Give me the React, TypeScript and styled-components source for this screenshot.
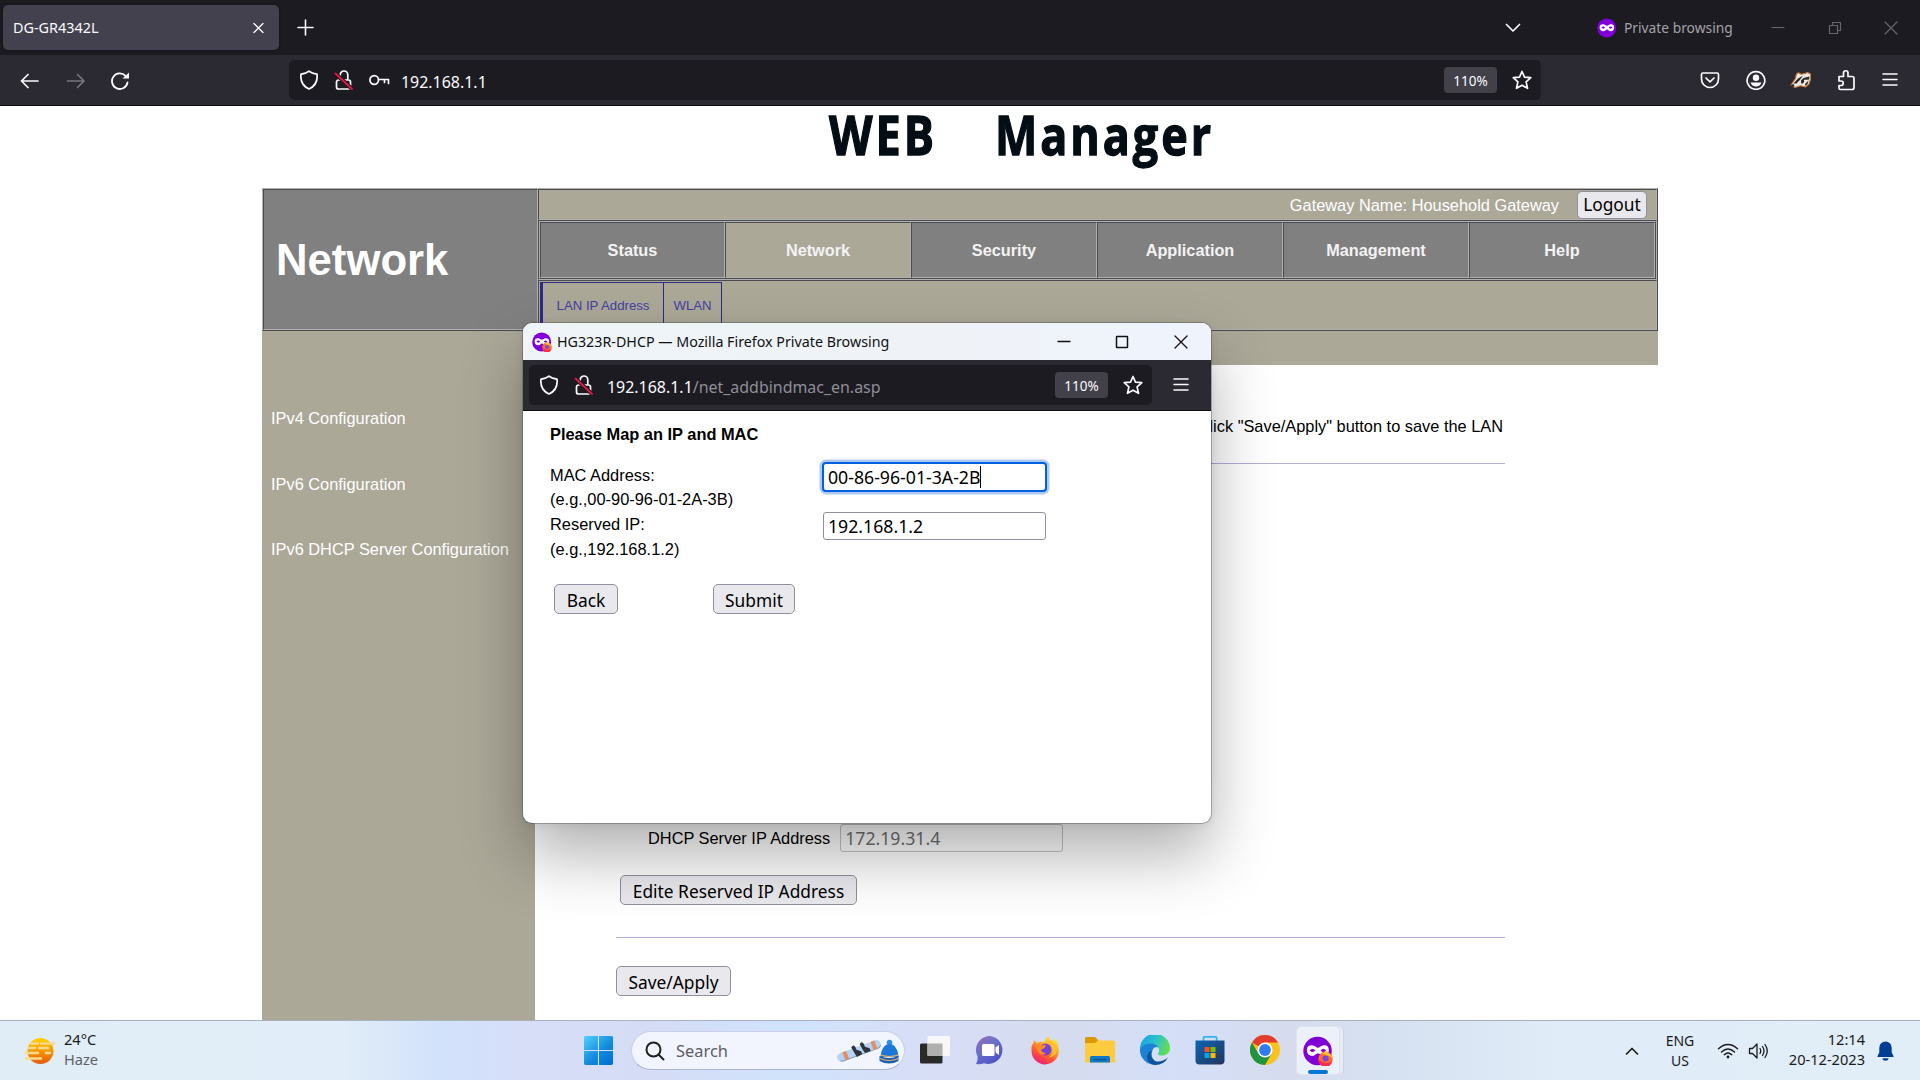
import React from 'react';
import styled, { createGlobalStyle, css } from 'styled-components';

const segoe = '"Noto Sans", "Open Sans", sans-serif';
const arial = '"Liberation Sans", Arial, sans-serif';
const sand = '#aba898';
const light = '#b0b0b0';
const dark = '#4b4b50';

const GlobalStyle = createGlobalStyle`
  * { box-sizing: border-box; }
  body { margin: 0; overflow: hidden; background: #fff; }
  svg { display: block; flex: none; }
`;

const Desktop = styled.div`
  width: 1920px;
  height: 1080px;
  display: grid;
  grid-template-rows: 55px 51px 914px 60px;
  font-family: ${segoe};
  position: relative;
  overflow: hidden;
`;

/* ---------- browser chrome ---------- */
const TabBar = styled.header`
  background: #1c1b22;
  display: flex;
  align-items: center;
  color: #fbfbfe;
`;
const Tab = styled.div`
  width: 276px;
  height: 45px;
  margin-left: 3px;
  border-radius: 5px;
  background: #42414d;
  box-shadow: 0 0 3px rgba(0, 0, 0, 0.5);
  display: flex;
  align-items: center;
  justify-content: space-between;
  padding: 0 15px 0 10px;
  font-size: 14.4px;
`;
const Gap = styled.div<{ $w: number }>`
  width: ${(p) => p.$w}px;
  flex: none;
`;
const Grow = styled.div`
  flex: 1;
`;
const PrivateLabel = styled.span`
  font-size: 13.8px;
  color: #a3a2a8;
  width: 148px;
  padding: 0 0 1px 7px;
`;
const Toolbar = styled.nav`
  background: #2b2a33;
  border-bottom: 1px solid #0c0c0d;
  display: flex;
  align-items: center;
  color: #fbfbfe;
`;
const UrlField = styled.div<{ $w: number }>`
  width: ${(p) => p.$w}px;
  height: 40px;
  border-radius: 5px;
  background: #1c1b22;
  display: flex;
  align-items: center;
  padding: 0 9px 0 10px;
`;
const Url = styled.span`
  font-size: 15.95px;
  line-height: 24px;
  padding-top: 4px;
  white-space: nowrap;
`;
const Dim = styled.span`
  color: #8f8f96;
`;
const Zoom = styled.span`
  width: 53px;
  height: 26px;
  line-height: 28px;
  border-radius: 4px;
  background: #42414a;
  font-size: 13.5px;
  text-align: center;
`;

/* ---------- router page ---------- */
const Page = styled.main`
  background: #fff;
  font-family: ${arial};
  font-size: 16.37px;
  padding-left: 262px;
`;
const Logo = styled.div`
  height: 82px;
  svg {
    overflow: visible;
  }
`;
const Header = styled.div`
  width: 1396px;
  height: 143px;
  display: grid;
  grid-template-columns: 275px 1fr;
  background: ${sand};
  border: 1px solid;
  border-color: ${light} ${dark} ${dark} ${light};
`;
const inset = css`
  border: 1px solid;
  border-color: ${dark} ${light} ${light} ${dark};
`;
const Section = styled.h1`
  ${inset}
  margin: 0;
  background: #808080;
  color: #fff;
  font-size: 43.7px;
  display: flex;
  align-items: center;
  padding-left: 12px;
`;
const HeaderRows = styled.div`
  display: grid;
  grid-template-rows: 31px 60px 50px;
`;
const GatewayRow = styled.div`
  ${inset}
  display: flex;
  align-items: center;
  justify-content: flex-end;
  gap: 18px;
  padding: 0 9px 0 0;
  color: #fff;
`;
const GatewayName = styled.span`
  padding-top: 2px;
`;
const MenuRow = styled.div`
  ${inset}
`;
const Menu = styled.div`
  height: 58px;
  width: 1117px;
  display: grid;
  grid-template-columns: 185px repeat(5, 186px);
  border: 1px solid;
  border-color: ${light} ${dark} ${dark} ${light};
`;
const MenuItem = styled.div<{ $on?: boolean }>`
  ${inset}
  background: ${(p) => (p.$on ? sand : '#808080')};
  color: #f3f3f3;
  font-weight: bold;
  font-size: 16.3px;
  display: flex;
  align-items: center;
  justify-content: center;
`;
const SubRow = styled.div`
  ${inset}
  display: flex;
  padding: 1px 0 0 1px;
`;
const SubItem = styled.div<{ $w: number; $first?: boolean }>`
  width: ${(p) => p.$w}px;
  height: 47px;
  border: solid #2c2c88;
  border-width: 1px 0 0 ${(p) => (p.$first ? 3 : 1)}px;
  color: #4340a0;
  font-size: 13.2px;
  display: flex;
  align-items: center;
  justify-content: center;
  padding-bottom: 1px;
  &:last-child {
    border-right-width: 1px;
  }
`;
const Body = styled.div`
  width: 1396px;
  height: 689px;
  display: grid;
  grid-template-columns: 273px 1fr;
`;
const Side = styled.aside`
  background: ${sand};
  color: #fff;
  padding: 67px 0 0 9px;
`;
const SideLink = styled.div`
  height: 65.6px;
  line-height: 40px;
`;
const Main = styled.section`
  display: flex;
  flex-direction: column;
`;
const Strip = styled.div`
  height: 34px;
  background: ${sand};
`;
const Content = styled.div`
  width: 889px;
  margin-left: 81px;
  display: flex;
  flex-direction: column;
  align-items: flex-start;
`;
const Notice = styled.p`
  margin: 51px 2px 0 0;
  align-self: flex-end;
  line-height: 20px;
  white-space: nowrap;
`;
const Rule = styled.hr<{ $top: number }>`
  width: 100%;
  height: 1px;
  border: 0;
  margin: ${(p) => p.$top}px 0 0;
  background: #b0aedb;
`;
const ServerRow = styled.div`
  display: flex;
  align-items: center;
  gap: 10px;
  margin: 360px 0 0 32px;
`;
const Button = styled.button<{ $w: number; $h?: number; $m?: string; $lift?: boolean }>`
  width: ${(p) => p.$w}px;
  height: ${(p) => p.$h ?? 30}px;
  margin: ${(p) => p.$m ?? 0};
  padding: ${(p) => (p.$lift ? '0 0 1px' : '2px 0 0')};
  border: 1px solid #8f8f9d;
  border-radius: 5px;
  background: #e9e9ed;
  color: #000;
  font-family: ${segoe};
  font-size: 17.35px;
  line-height: 24px;
  white-space: nowrap;
`;
const inputBase = css`
  height: 28px;
  border-radius: 3px;
  background: #fff;
  font-family: ${segoe};
  font-size: 17.7px;
  line-height: 24px;
  display: flex;
  align-items: center;
  padding: 0 0 0 4px;
`;
const Field = styled.div<{ $disabled?: boolean }>`
  ${inputBase}
  width: 223px;
  border: 1px solid ${(p) => (p.$disabled ? '#c4c4c8' : '#8f8f9d')};
  color: ${(p) => (p.$disabled ? '#6f6f70' : '#000')};
`;
const FocusField = styled.div`
  ${inputBase}
  width: 225px;
  height: 30px;
  margin: 0 0 20px -1px;
  border: 2px solid #0061e0;
  border-radius: 4px;
  box-shadow: 0 0 0 2.5px #b0c9f0;
`;
const Caret = styled.span`
  width: 1px;
  height: 22px;
  background: #000;
`;

/* ---------- popup window ---------- */
const Popup = styled.div`
  position: absolute;
  left: 523px;
  top: 323px;
  width: 688px;
  height: 500px;
  border-radius: 9px;
  overflow: hidden;
  background: #fff;
  box-shadow: 0 0 0 1px rgba(60, 60, 60, 0.35), 0 32px 64px rgba(0, 0, 0, 0.31), 0 2px 10px rgba(0, 0, 0, 0.08);
  display: grid;
  grid-template-rows: 37px 51px 1fr;
`;
const TitleBar = styled.div`
  background: linear-gradient(90deg, #eef4f8, #eff3f8 60%, #eff3fc);
  display: flex;
  align-items: center;
  padding-left: 9px;
  font-size: 14.27px;
  color: #111;
`;
const Title = styled.span`
  padding: 0 0 1px 5px;
  white-space: nowrap;
`;
const Form = styled.div`
  font-family: ${arial};
  font-size: 16.4px;
  line-height: 24.6px;
  padding: 11px 0 0 27px;
  color: #000;
`;
const FormTitle = styled.div`
  font-weight: bold;
  font-size: 16.4px;
`;
const FormGrid = styled.div`
  display: grid;
  grid-template-columns: 273px 1fr;
  margin-top: 15px;
`;
const Labels = styled.div`
  padding-top: 1px;
  line-height: 24.8px;
`;
const Actions = styled.div`
  display: flex;
  gap: 95px;
  margin: 22px 0 0 4px;
`;

/* ---------- taskbar ---------- */
const Taskbar = styled.footer`
  border-top: 1px solid #a9b1bf;
  background: linear-gradient(
    90deg,
    #e1edf6 0,
    #e1edf8 340px,
    #d2e2fb 440px,
    #d7def8 530px,
    #d5dcf6 650px,
    #d0e3fb 790px,
    #d7def6 930px,
    #d6dcef 1070px,
    #d4dff8 1170px,
    #d6dcee 1290px,
    #d6e2f1 1400px,
    #e0ecf7 1560px,
    #e1edf7 1920px
  );
  display: flex;
  align-items: center;
  color: #1b1b1b;
  font-size: 14.6px;
  line-height: 20px;
`;
const Lines = styled.div<{ $w?: number; $align?: string; $size?: number; $lift?: number }>`
  width: ${(p) => (p.$w ? `${p.$w}px` : 'auto')};
  text-align: ${(p) => p.$align ?? 'left'};
  font-size: ${(p) => p.$size ?? 14.6}px;
  padding-bottom: ${(p) => p.$lift ?? 0}px;
  white-space: nowrap;
`;
const Muted = styled.div`
  color: #5d6064;
`;
const SearchPill = styled.div`
  width: 274px;
  height: 39px;
  margin-left: 18px;
  border-radius: 20px;
  background: #f2f5fd;
  border: 1px solid #c9d0e6;
  border-bottom-color: #aeb5cc;
  display: flex;
  align-items: center;
  padding: 0 5px 0 13px;
  font-size: 16.4px;
  color: #5c5e63;
`;
const AppRow = styled.div`
  display: flex;
  align-items: center;
  gap: 25px;
  margin: 0 0 1px 15px;
`;
const ActiveTile = styled.div`
  width: 44px;
  height: 49px;
  margin-left: 16px;
  border-radius: 5px;
  background: #ecf0f9;
  border: 1px solid #dfe4ef;
  box-shadow: 4px 0 0 -1px #e5eaf5, 5px 0 0 -1px #cdd4e2;
  display: flex;
  flex-direction: column;
  align-items: center;
  justify-content: space-between;
  padding-top: 9px;
`;
const Indicator = styled.div`
  width: 20px;
  height: 4px;
  border-radius: 2px;
  background: #0078d4;
`;

/* ---------- icons ---------- */
type G = { d: string; w?: number; h?: number; sw?: number; color?: string; children?: React.ReactNode };
const Glyph = ({ d, w = 20, h = 20, sw = 1.5, color = 'currentColor', children }: G) => (
  <svg width={w} height={h} viewBox={`0 0 ${w} ${h}`} fill="none" stroke={color} strokeWidth={sw} strokeLinecap="round" strokeLinejoin="round">
    <path d={d} />
    {children}
  </svg>
);
const Shield = () => (
  <Glyph sw={1.7} d="M10 1.2C8 3 5 3.8 2 4.2C1.2 11 3.5 16 10 19C16.500 16 18.800 11 18 4.200C15 3.800 12 3 10 1.200Z" />
);
const Lock = () => (
  <Glyph sw={1.7} d="M6.200 7V4.800A3.800 3.800 0 0 1 13.800 4.800V9M4.500 10H14.500A2 2 0 0 1 16.500 12V17A2 2 0 0 1 14.500 19H4.500A2 2 0 0 1 2.500 17V12A2 2 0 0 1 4.500 10Z">
    <path d="M1.500 3.500L18 19" stroke="#1c1b22" strokeWidth="4" />
    <path d="M1.500 3.500L18 19" stroke="#e8173f" strokeWidth="1.8" />
  </Glyph>
);
const Star = () => (
  <Glyph sw={1.7} d="M10 1.500L12.500 7.100L18.800 7.700L14.100 11.900L15.500 18.300L10 15.200L4.500 18.300L5.900 11.900L1.200 7.700L7.500 7.100Z" />
);
const Burger = () => <Glyph w={16} h={16} d="M1 2H15M1 7.500H15M1 13H15" />;
const Mask = ({ size = 20, fox }: { size?: number; fox?: boolean }) => (
  <svg width={size} height={size} viewBox="0 0 20 20">
    <circle cx="9.700" cy="10" r="9.500" fill="#8000d7" />
    <path
      d="M2.600 9.200C2.600 6.700 4.700 5.800 6.600 6.300C8.300 6.700 8.900 7.800 10 7.800S11.500 6.700 13.200 6.300C15.300 5.800 17.200 6.700 17.200 9.200C17.200 12 15.700 13.300 13.700 13.300C12 13.300 11.200 11.500 10 11.500S8 13.300 6.200 13.300C4.200 13.300 2.600 12 2.600 9.200Z"
      fill="#fff"
    />
    <path d="M4.500 9.600Q6.200 7.300 8.200 9.600Q6.200 11.800 4.500 9.600ZM11.700 9.600Q13.600 7.300 15.400 9.600Q13.600 11.800 11.700 9.600Z" fill="#8000d7" />
    {fox && (
      <g>
        <circle cx="15" cy="15.200" r="4.800" fill="#ff6a2c" />
        <path d="M12 11.500C14 12 15 10 16 10C17 12 20 13 19.700 15.500C18.500 12.500 15 13 12 11.500Z" fill="#ffc533" />
        <circle cx="15" cy="15" r="2" fill="#7a45d8" />
        <path d="M10.400 15.500A4.600 4.600 0 0 0 19.600 16.500C17 19 13 18 10.400 15.500Z" fill="#f5304f" />
      </g>
    )}
  </svg>
);
const Badger = () => (
  <svg width="22" height="18" viewBox="0 0 22 18">
    <path d="M1 14L5.500 7.500L6.500 3L8.500 1.800L11 3.200L15 2.500L17.500 1.500L20.500 3L20.500 8L19 13L15.500 16L10.500 14.800L5 16.500Z" fill="#ece8e2" stroke="#c9763a" strokeWidth="1.100" strokeLinejoin="round" />
    <path d="M3.500 12.500L8 7.500L13 4.800L9.800 9L6.500 12.500ZM11 9.500L13.500 7L19.500 5.500L19 8.500L15 9L13 12.500L11.200 12.500Z" fill="#2b2725" />
    <path d="M1 14L3.500 13L4.500 15L2.500 16ZM15 13L18.500 9.500L17.500 13L15.500 15Z" fill="#2b2725" />
    <path d="M14 9.300H16.500" stroke="#fff" />
  </svg>
);
const Haze = () => (
  <svg width="30" height="32" viewBox="0 0 30 32">
    <defs>
      <linearGradient id="sun" x1="0" y1="0" x2="0" y2="1">
        <stop offset="0" stopColor="#ffd400" />
        <stop offset="1" stopColor="#e65a0c" />
      </linearGradient>
    </defs>
    <circle cx="15.500" cy="16" r="13" fill="url(#sun)" />
    <path d="M6 8.500H13M16 8.500H29M4 13H10M14 13H23M1 18H13M21 18H25M1 23.500H16" stroke="#f8d98b" strokeWidth="2.600" strokeLinecap="round" />
  </svg>
);
const WinLogo = () => (
  <svg width="29" height="29" viewBox="0 0 30 30">
    <defs>
      <linearGradient id="win" gradientUnits="userSpaceOnUse" x1="0" y1="0" x2="26" y2="30">
        <stop offset="0" stopColor="#4fd2ff" />
        <stop offset="0.600" stopColor="#1389dd" />
        <stop offset="1" stopColor="#0072d0" />
      </linearGradient>
    </defs>
    <path d="M0 1.500Q0 0 1.500 0H14.400V14.400H0ZM15.500 0H28.500Q30 0 30 1.500V14.400H15.500ZM0 15.500H14.400V30H1.500Q0 30 0 28.500ZM15.500 15.500H30V28.500Q30 30 28.500 30H15.500Z" fill="url(#win)" />
  </svg>
);
const Winter = () => (
  <svg width="62" height="28" viewBox="0 0 62 28">
    <g transform="rotate(-20 22 14)">
      <rect x="-1" y="9.500" width="46" height="8.500" rx="4.200" fill="#b3d4f6" />
      <path d="M1 17Q3 18 6 18H40Q43 18 44.500 16" stroke="#7f9ccc" fill="none" />
      <path d="M6 9.500H10V18H6ZM36 9.500H40V18H36Z" fill="#e88d5c" />
      <path d="M16 8Q19 5 20 9V12L24 15V18L18 19L17 14ZM25 8Q28 5 29 9V12L33 15V18L27 18L26 14Z" fill="#303238" />
    </g>
    <circle cx="52.500" cy="5.500" r="2.800" fill="#2d8de8" />
    <path d="M43.500 20C44 13 47 7 52.500 7S61 13 61.500 20Z" fill="#1c78d8" />
    <path d="M42.500 19Q52 23 61.500 19V24Q52 29 42.500 24Z" fill="#1c5fb8" />
    <path d="M43 21.500Q52 25.500 61.500 21.500M44 18Q52 21 61 18" stroke="#e6b35a" strokeWidth="1.200" fill="none" />
  </svg>
);
const TaskView = () => (
  <svg width="30" height="30" viewBox="0 0 30 30">
    <rect x="0" y="8.500" width="22.500" height="20" rx="1.500" fill="#2a2a29" />
    <rect x="7.500" y="1" width="22.500" height="20" rx="1.500" fill="#f7f7f7" />
    <rect x="7.500" y="8.500" width="15" height="12.500" fill="#b0b0ae" />
  </svg>
);
const Chat = () => (
  <svg width="30" height="30" viewBox="0 0 30 30">
    <defs>
      <linearGradient id="chat" x1="0" y1="0" x2="0.700" y2="1">
        <stop offset="0" stopColor="#9a6cae" />
        <stop offset="0.450" stopColor="#6c71cc" />
        <stop offset="1" stopColor="#4d51c4" />
      </linearGradient>
    </defs>
    <path d="M15 1A14 14 0 1 1 9 28.200Q5 29.500 1 29Q3 26 2.500 21.500A14 14 0 0 1 15 1Z" fill="url(#chat)" />
    <rect x="7" y="9" width="12.500" height="12" rx="1.500" fill="#fff" />
    <path d="M20.500 12.500L24 10V20L20.500 17.500Z" fill="#fff" />
  </svg>
);
const Fox = () => (
  <svg width="30" height="30" viewBox="0 0 30 30">
    <defs>
      <linearGradient id="fox" x1="0.800" y1="0" x2="0.300" y2="1">
        <stop offset="0" stopColor="#fff04a" />
        <stop offset="0.350" stopColor="#ffb32b" />
        <stop offset="0.650" stopColor="#ff5f2e" />
        <stop offset="1" stopColor="#f5167a" />
      </linearGradient>
    </defs>
    <path d="M4 5L7 8Q10 5.500 14 7Q15.500 3 18.500 0.500Q19 4 22 6.500L25 3.500Q29 9 28.800 16A13.500 13.500 0 0 1 1.500 15.500Q1 10 3.500 8Z" fill="url(#fox)" />
    <circle cx="15.500" cy="14.500" r="6" fill="#7542d6" />
    <path d="M5 9Q10 9 12 10.500L16 10Q15 14 11 14.500Q12 18 16 18Q14 21 10 19Q7 16 5 9Z" fill="#ff8a28" />
    <path d="M17 8Q23 10 22.500 17Q22 21 18 22.500Q26 22 27 15Q26 8 20 5Z" fill="#ffc02c" />
  </svg>
);
const Folder = () => (
  <svg width="30" height="28" viewBox="0 0 30 28">
    <path d="M0 2.500Q0 1 1.500 1H10L13.500 4.500V9H0Z" fill="#d99a06" />
    <path d="M0 7H10L13 4.500H28.500Q30 4.500 30 6V26.500H0Z" fill="#fdcb3f" />
    <path d="M5 26.500V21.500Q5 20 6.500 20H23.500Q25 20 25 21.500V26.500Z" fill="#0f79c5" />
    <path d="M8.500 23.500H21.500" stroke="#0a4f8f" strokeWidth="1.200" />
  </svg>
);
const Edge = () => (
  <svg width="30" height="30" viewBox="0 0 30 30">
    <defs>
      <linearGradient id="edgeTop" x1="0" y1="0.300" x2="1" y2="0.600">
        <stop offset="0" stopColor="#1aa4e4" />
        <stop offset="0.500" stopColor="#2cc2c8" />
        <stop offset="1" stopColor="#66e04c" />
      </linearGradient>
    </defs>
    <path d="M0 14.500A15 15 0 0 1 30 13C30 18.500 26 20.500 22 20.500C18 20.500 17.500 19 18.500 17.500C20.500 14 18 10.500 13 10.500Q4 10.500 0 17Z" fill="url(#edgeTop)" />
    <path d="M0 15Q2 8.500 10.500 8.500Q16 8.500 18.500 12.500Q15 11 13 14Q9 22 17 28.500Q16.500 30 15 30A15 15 0 0 1 0 15Z" fill="#1b82d6" />
    <path d="M12 15.500Q8 21 15 26Q21 28 28 22.500Q24 30 15 30Q7 29 7 21.500Q7.500 17 12 15.500Z" fill="#0f539c" />
  </svg>
);
const Store = () => (
  <svg width="30" height="30" viewBox="0 0 30 30">
    <defs>
      <linearGradient id="store" x1="0" y1="0" x2="1" y2="1">
        <stop offset="0" stopColor="#0d65b5" />
        <stop offset="1" stopColor="#22355c" />
      </linearGradient>
    </defs>
    <path d="M8.500 6.500V3Q8.500 1.800 9.700 1.800H20.500Q21.700 1.800 21.700 3V6.500" fill="none" stroke="#34b4ee" strokeWidth="1.800" />
    <path d="M0.500 5.500H29.500V25.500Q29.500 29.500 25.500 29.500H4.500Q0.500 29.500 0.500 25.500Z" fill="url(#store)" />
    <path d="M9.500 12H14.500V17H9.500Z" fill="#f25022" />
    <path d="M15.500 12H20.500V17H15.500Z" fill="#7fba00" />
    <path d="M9.500 18H14.500V23H9.500Z" fill="#00a4ef" />
    <path d="M15.500 18H20.500V23H15.500Z" fill="#ffb900" />
  </svg>
);
const Chrome = () => (
  <svg width="30" height="30" viewBox="0 0 30 30">
    <circle cx="15" cy="15" r="15" fill="#fcc31e" />
    <path d="M15 15L2 7.500A15 15 0 0 1 28 7.500H15Z" fill="#e33b2e" />
    <path d="M2 7.500A15 15 0 0 0 15 30L21.500 18.700L8.500 18.700Z" fill="#229342" />
    <circle cx="15" cy="15" r="7.500" fill="#fff" />
    <circle cx="15" cy="15" r="5.900" fill="#2f7cf0" />
  </svg>
);
const Bell = () => (
  <svg width="17" height="20" viewBox="0 0 17 20">
    <path d="M8.500 0.500A6.200 6.200 0 0 1 14.700 6.700V11.500L16.500 15V16H0.500V15L2.300 11.500V6.700A6.200 6.200 0 0 1 8.500 0.500ZM5.500 17.300H11.500A3 2.400 0 0 1 5.500 17.300Z" fill="#003e92" />
  </svg>
);

const menu = ['Status', 'Network', 'Security', 'Application', 'Management', 'Help'];
const links = ['IPv4 Configuration', 'IPv6 Configuration', 'IPv6 DHCP Server Configuration'];

export default function App() {
  return (
    <Desktop>
      <GlobalStyle />
      <TabBar>
        <Tab>
          DG-GR4342L
          <Glyph w={11} h={12} sw={1.3} d="M1 1.500L10 10.500M10 1.500L1 10.500" />
        </Tab>
        <Gap $w={18} />
        <Glyph w={17} h={17} sw={1.6} d="M8.500 1V16M1 8.500H16" />
        <Grow />
        <Glyph w={16} h={10} sw={1.7} d="M1.500 1.500L8 8L14.500 1.500" />
        <Gap $w={76} />
        <Mask />
        <PrivateLabel>Private browsing</PrivateLabel>
        <Gap $w={6} />
        <Glyph w={14} h={14} sw={1} color="#66656c" d="M1 6.500H13" />
        <Gap $w={43} />
        <Glyph w={14} h={14} sw={1.200} color="#66656c" d="M1.500 4.500H9.500V12.500H1.500ZM4.500 4V1.500H12.500V9.500H10" />
        <Gap $w={42} />
        <Glyph w={14} h={14} sw={1.200} color="#66656c" d="M1 1L13 13M13 1L1 13" />
        <Gap $w={22} />
      </TabBar>
      <Toolbar>
        <Gap $w={20} />
        <Glyph w={20} sw={1.700} d="M1.500 11H18M8 4.500L1.500 11L8 17.500" />
        <Gap $w={26} />
        <Glyph w={20} sw={1.700} color="#77767e" d="M1.500 11H18M11.500 4.500L18 11L11.500 17.500" />
        <Gap $w={24} />
        <Glyph w={20} sw={1.800} d="M17.500 12.500A7.800 7.800 0 1 1 15.500 5.800L17 7">
          <path d="M12.500 8.500H19V2.500Z" fill="currentColor" stroke="none" />
        </Glyph>
        <Gap $w={159} />
        <UrlField $w={1252}>
          <Shield />
          <Gap $w={15} />
          <Lock />
          <Gap $w={14} />
          <Glyph w={22} h={20} sw={1.700} d="M10.500 10A4.300 4.300 0 1 1 1.900 10A4.300 4.300 0 1 1 10.500 10ZM10.500 9.500H20.500V13.500M16.500 9.500V12.500" />
          <Gap $w={11} />
          <Url>192.168.1.1</Url>
          <Grow />
          <Zoom>110%</Zoom>
          <Gap $w={15} />
          <Star />
        </UrlField>
        <Grow />
        <Glyph sw={1.700} d="M3 3H17Q18.500 3 18.500 4.500V9A8.500 8.500 0 0 1 1.500 9V4.500Q1.500 3 3 3ZM6 8L10 11.800L14 8" />
        <Gap $w={26} />
        <Glyph sw={1.700} d="M10 1.700A8.800 8.800 0 1 1 9.900 1.700Z">
          <circle cx="10" cy="7.800" r="3.200" fill="currentColor" stroke="none" />
          <path d="M4.500 12.500H15.500Q14 16.500 10 16.500T4.500 12.500Z" fill="currentColor" stroke="none" />
        </Glyph>
        <Gap $w={24} />
        <Badger />
        <Gap $w={24} />
        <Glyph w={20} h={22} sw={1.700} d="M3 7.500H7.500V4A2.200 2.200 0 0 1 12 4V7.500H16Q18 7.500 18 9.500V18.500Q18 20.500 16 20.500H4.500Q3 20.500 3 19V16.500H5A2.200 2.200 0 0 0 5 12H3V9Z" />
        <Gap $w={26} />
        <Burger />
        <Gap $w={22} />
      </Toolbar>
      <Page>
        <Logo>
          <svg width="1000" height="82" viewBox="0 0 1000 82">
            <g fill="#020d14" stroke="#020d14" strokeWidth="1.300" fontFamily='"Open Sans", sans-serif' fontWeight="700" fontSize="53">
              <text x="567" y="49" textLength="108" lengthAdjust="spacingAndGlyphs" letterSpacing="3.500">WEB</text>
              <text x="733" y="49" textLength="219" lengthAdjust="spacingAndGlyphs" letterSpacing="3.500">Manager</text>
            </g>
          </svg>
        </Logo>
        <Header>
          <Section>Network</Section>
          <HeaderRows>
            <GatewayRow>
              <GatewayName>Gateway Name: Household Gateway</GatewayName>
              <Button $w={70} $h={28} $lift>Logout</Button>
            </GatewayRow>
            <MenuRow>
              <Menu>
                {menu.map((m) => (
                  <MenuItem key={m} $on={m === 'Network'}>{m}</MenuItem>
                ))}
              </Menu>
            </MenuRow>
            <SubRow>
              <SubItem $w={123} $first>LAN IP Address</SubItem>
              <SubItem $w={59}>WLAN</SubItem>
            </SubRow>
          </HeaderRows>
        </Header>
        <Body>
          <Side>
            {links.map((l) => (
              <SideLink key={l}>{l}</SideLink>
            ))}
          </Side>
          <Main>
            <Strip />
            <Content>
              <Notice>Click "Save/Apply" button to save the LAN</Notice>
              <Rule $top={27} />
              <ServerRow>
                DHCP Server IP Address
                <Field $disabled>172.19.31.4</Field>
              </ServerRow>
              <Button $w={237} $m="23px 0 0 4px">Edite Reserved IP Address</Button>
              <Rule $top={32} />
              <Button $w={115} $m="28px 0 0 0">Save/Apply</Button>
            </Content>
          </Main>
        </Body>
      </Page>
      <Taskbar>
        <Gap $w={25} />
        <Haze />
        <Gap $w={9} />
        <Lines $w={511} $lift={4}>
          24°C
          <Muted>Haze</Muted>
        </Lines>
        <Gap $w={9} />
        <WinLogo />
        <SearchPill>
          <Glyph w={20} sw={2} color="#222" d="M15.500 8.500A7 7 0 1 1 1.500 8.500A7 7 0 1 1 15.500 8.500ZM13.500 13.500L18.500 18.500" />
          <Gap $w={11} />
          Search
          <Grow />
          <Winter />
        </SearchPill>
        <AppRow>
          <TaskView />
          <Chat />
          <Fox />
          <Folder />
          <Edge />
          <Store />
          <Chrome />
        </AppRow>
        <ActiveTile>
          <Mask size={30} fox />
          <Indicator />
        </ActiveTile>
        <Grow />
        <Glyph w={14} h={10} sw={1.700} d="M1.500 8L7 2.500L12.500 8" />
        <Gap $w={20} />
        <Lines $w={42} $align="center" $size={14}>
          ENG<br />US
        </Lines>
        <Gap $w={16} />
        <Glyph w={22} h={18} sw={1.400} d="M1.500 6.800Q11 -1.600 20.500 6.800M4.500 10Q11 4 17.500 10M7.300 12.800Q11 9.300 14.700 12.800">
          <circle cx="11" cy="15" r="1.400" fill="currentColor" stroke="none" />
        </Glyph>
        <Gap $w={9} />
        <Glyph w={22} h={18} sw={1.300} d="M1.500 6.500H4.500L9 2V16L4.500 11.500H1.500ZM12 6.500Q13.500 9 12 11.500M14.500 4.500Q17.500 9 14.500 13.500M17 2.500Q21.500 9 17 15.500" />
        <Lines $w={95} $align="right" $lift={4}>
          12:14<br />20-12-2023
        </Lines>
        <Gap $w={12} />
        <Bell />
        <Gap $w={26} />
      </Taskbar>
      <Popup>
        <TitleBar>
          <Mask fox />
          <Title>HG323R-DHCP — Mozilla Firefox Private Browsing</Title>
          <Grow />
          <Glyph w={14} h={14} sw={1.300} d="M1 6.500H13" />
          <Gap $w={44} />
          <Glyph w={14} h={14} sw={1.500} d="M2 1.500H12Q12.500 1.500 12.500 2V12Q12.500 12.500 12 12.500H2Q1.500 12.500 1.500 12V2Q1.500 1.500 2 1.500Z" />
          <Gap $w={45} />
          <Glyph w={14} h={14} sw={1.300} d="M1 1L13 13M13 1L1 13" />
          <Gap $w={23} />
        </TitleBar>
        <Toolbar>
          <Gap $w={6} />
          <UrlField $w={623}>
            <Shield />
            <Gap $w={15} />
            <Lock />
            <Gap $w={13} />
            <Url>192.168.1.1<Dim>/net_addbindmac_en.asp</Dim></Url>
            <Grow />
            <Zoom>110%</Zoom>
            <Gap $w={15} />
            <Star />
          </UrlField>
          <Gap $w={21} />
          <Burger />
        </Toolbar>
        <Form>
          <FormTitle>Please Map an IP and MAC</FormTitle>
          <FormGrid>
            <Labels>
              <div>MAC Address:</div>
              <div>(e.g.,00-90-96-01-2A-3B)</div>
              <div>Reserved IP:</div>
              <div>(e.g.,192.168.1.2)</div>
            </Labels>
            <div>
              <FocusField>00-86-96-01-3A-2B<Caret /></FocusField>
              <Field>192.168.1.2</Field>
            </div>
          </FormGrid>
          <Actions>
            <Button $w={64}>Back</Button>
            <Button $w={82}>Submit</Button>
          </Actions>
        </Form>
      </Popup>
    </Desktop>
  );
}
